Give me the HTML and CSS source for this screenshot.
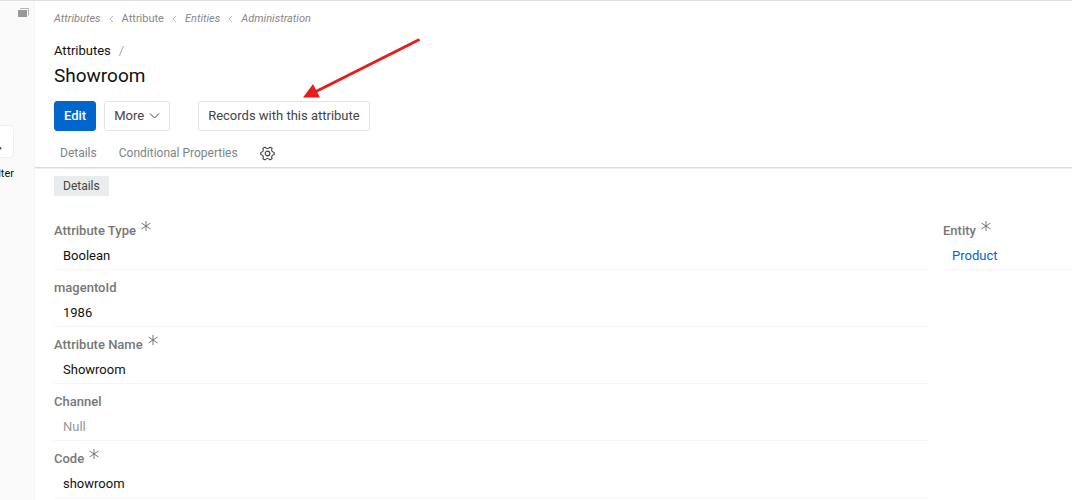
FILE: index.html
```
<!DOCTYPE html>
<html lang="en">

<head>
    <meta charset="utf-8">
    <meta name="viewport" content="width=device-width, initial-scale=1">
    <title>Showroom</title>
    <link rel="stylesheet" href="styles.css">
</head>

<body>
    <aside class="sidebar">
        <button class="collapse" aria-label="Collapse panel">
            <svg width="12" height="10" viewBox="0 0 12 10">
                <path d="M2 .5h8.500v7" fill="none" stroke="#b5b5b5" />
                <rect y="2" width="9" height="7" fill="#999" />
            </svg>
        </button>
        <button class="search" aria-label="Search">
            <svg width="16" height="16" viewBox="0 0 16 16" fill="none" stroke="#444" stroke-width="2">
                <circle cx="6" cy="6" r="5" />
                <path d="M10 10l5 5" />
            </svg>
        </button>
        <span class="filter">Filter</span>
    </aside>

    <main class="page">
        <header class="header">
            <nav class="crumbs">
                <a href="#"><i>Attributes</i></a>
                <svg class="sep" viewBox="0 0 5 8"><path d="M4 1L1 4l3 3" /></svg>
                <a href="#">Attribute</a>
                <svg class="sep" viewBox="0 0 5 8"><path d="M4 1L1 4l3 3" /></svg>
                <a href="#"><i>Entities</i></a>
                <svg class="sep" viewBox="0 0 5 8"><path d="M4 1L1 4l3 3" /></svg>
                <a href="#"><i>Administration</i></a>
            </nav>
            <div class="parent"><a href="#">Attributes</a><span class="slash">/</span></div>
            <h1 class="title">Showroom</h1>
            <div class="buttons">
                <button class="btn primary">Edit</button>
                <button class="btn">More
                    <svg width="11" height="6" viewBox="0 0 11 6" fill="none" stroke="#444"><path d="M1 .5L5.500 5L10 .5" /></svg>
                </button>
                <button class="btn records">Records with this attribute</button>
            </div>
            <nav class="tabs">
                <a href="#">Details</a>
                <a href="#">Conditional Properties</a>
                <button class="gear" aria-label="Layout settings">
                    <svg width="15" height="15" viewBox="0 0 16 16" fill="none" stroke="#444" stroke-width="1.200" stroke-linejoin="round">
                        <path d="M15.200 6.900Q11.300 6 12.900 2.500L10.700 1.200Q8 4.200 5.300 1.200L3.100 2.500Q4.700 6 .8 6.900V9.100Q4.700 10 3.100 13.500L5.300 14.800Q8 11.800 10.700 14.800L12.900 13.500Q11.300 10 15.200 9.100z" />
                        <circle cx="8" cy="8" r="2.500" />
                    </svg>
                </button>
            </nav>
        </header>

        <section class="content">
            <button class="panel-name">Details</button>
            <div class="columns">
                <dl class="fields">
                    <div class="field">
                        <dt>Attribute Type <svg class="req" viewBox="0 0 10 10"><path d="M5 0v10M.5 2l9 6M9.500 2l-9 6" /></svg></dt>
                        <dd>Boolean</dd>
                    </div>
                    <div class="field">
                        <dt>magentoId</dt>
                        <dd>1986</dd>
                    </div>
                    <div class="field">
                        <dt>Attribute Name <svg class="req" viewBox="0 0 10 10"><path d="M5 0v10M.5 2l9 6M9.500 2l-9 6" /></svg></dt>
                        <dd>Showroom</dd>
                    </div>
                    <div class="field">
                        <dt>Channel</dt>
                        <dd class="null">Null</dd>
                    </div>
                    <div class="field">
                        <dt>Code <svg class="req" viewBox="0 0 10 10"><path d="M5 0v10M.5 2l9 6M9.500 2l-9 6" /></svg></dt>
                        <dd>showroom</dd>
                    </div>
                </dl>
                <dl class="fields side">
                    <div class="field">
                        <dt>Entity <svg class="req" viewBox="0 0 10 10"><path d="M5 0v10M.5 2l9 6M9.500 2l-9 6" /></svg></dt>
                        <dd><a href="#">Product</a></dd>
                    </div>
                </dl>
            </div>
        </section>
    </main>

    <svg class="arrow" width="120" height="64" viewBox="0 0 120 64">
        <path d="M118.500 3.500L14 56" stroke="#e81c1c" stroke-width="3" />
        <path d="M2 61.500L12 48l7 13.500z" fill="#e81c1c" />
    </svg>
</body>

</html>
```
FILE: styles.css
```
* {
    box-sizing: border-box;
}

body {
    margin: 0;
    height: 100vh;
    overflow: hidden;
    display: flex;
    border-top: 1px solid #e0e0e0;
    background: #fff;
    color: #111;
    font-family: Roboto, "Liberation Sans", sans-serif;
    font-size: 13px;
    line-height: 20px;
}

a {
    color: inherit;
    text-decoration: none;
}

button {
    font: inherit;
    color: inherit;
    cursor: pointer;
}

/* left panel, scrolled almost out of view */
.sidebar {
    flex: 0 0 35px;
    display: flex;
    flex-direction: column;
    align-items: flex-start;
    overflow: hidden;
    background: #fafafa;
    border-right: 1px solid #f5f5f5;
}

.collapse {
    display: flex;
    align-self: flex-end;
    margin: 7px 4px 0 0;
    padding: 0;
    border: 0;
    background: none;
}

.search {
    display: flex;
    align-items: center;
    justify-content: flex-end;
    width: 44px;
    height: 33px;
    margin: 107px 0 0 -30px;
    padding: 0 11px;
    border: 1px solid #eee;
    border-radius: 4px;
    background: #fff;
}

.filter {
    width: 44px;
    margin: 6px 0 0 -30px;
    font-size: 11px;
    text-align: right;
}

.page {
    flex: 1;
    min-width: 0;
}

.header {
    padding: 8px 19px 0;
    border-bottom: 1px solid #d8dadb;
    box-shadow: 0 1px #eee;
}

.crumbs {
    display: flex;
    align-items: center;
    gap: 8px;
    color: #888;
    font-size: 11px;
}

.sep {
    width: 5px;
    height: 8px;
    fill: none;
    stroke: #bbb;
}

.parent {
    margin-top: 12px;
}

.slash {
    margin-left: 8px;
    color: #aaa;
}

.title {
    margin: 3px 0 0;
    font-size: 19px;
    font-weight: 400;
    line-height: 24px;
}

.buttons {
    display: flex;
    gap: 8px;
    margin-top: 13px;
}

.btn {
    display: flex;
    align-items: center;
    gap: 5px;
    height: 30px;
    padding: 0 9px;
    border: 1px solid #e4e4e4;
    border-radius: 3px;
    background: #fff;
    color: #444;
}

.primary {
    border-color: #06c;
    background: #06c;
    color: #fff;
    font-weight: 500;
}

.records {
    margin-left: 20px;
}

.tabs {
    display: flex;
    align-items: center;
    gap: 22px;
    height: 28px;
    margin-top: 8px;
    padding: 0 6px;
    color: #7d848a;
    font-size: 12px;
}

.gear {
    display: flex;
    padding: 0;
    border: 0;
    background: none;
}

.content {
    padding-left: 19px;
}

.panel-name {
    display: block;
    height: 20px;
    margin-top: 8px;
    padding: 0 9px;
    border: 0;
    background: #e8eced;
    color: #444;
    font-size: 12px;
}

.columns {
    display: flex;
    gap: 15px;
    margin-top: 17px;
}

.fields {
    flex: 1;
    margin: 0;
}

.side {
    flex: 0 0 129px;
}

.field {
    height: 57px;
    padding-top: 8px;
    border-bottom: 1px solid #f5f5f5;
}

.field dt {
    display: flex;
    gap: 5px;
    color: #777;
    font-weight: 500;
}

.field dd {
    margin: 5px 0 0 9px;
}

.field .null {
    color: #999;
}

.field dd a {
    color: #06c;
}

.req {
    width: 10px;
    height: 10px;
    fill: none;
    stroke: #777;
}

/* callout drawn over the page */
.arrow {
    position: absolute;
    left: 301px;
    top: 36px;
    pointer-events: none;
}
```
